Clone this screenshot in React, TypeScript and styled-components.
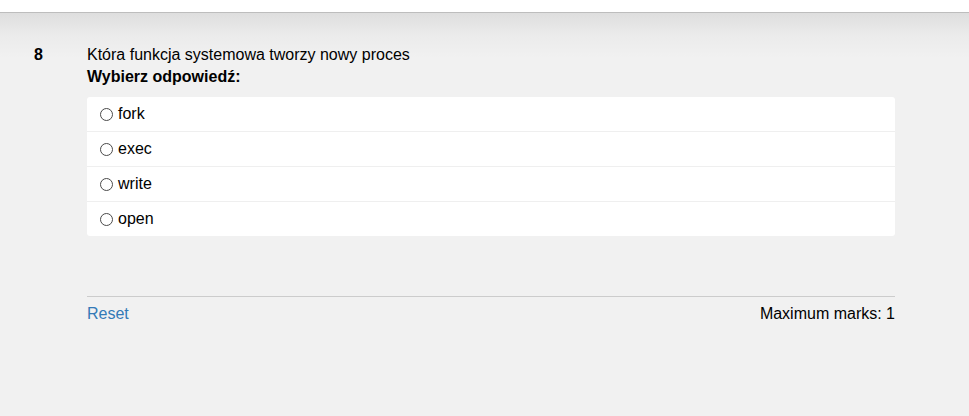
import React from "react";
import styled, { createGlobalStyle } from "styled-components";

const Global = createGlobalStyle`
  html, body { margin: 0; padding: 0; }
  body {
    background: #f1f1f1;
    font-family: "Liberation Sans", Arial, sans-serif;
    font-size: 16px;
    color: #000;
  }
`;

const Page = styled.div`
  min-height: 416px;
  background: #f1f1f1;
`;

const TopBar = styled.div`
  height: 12px;
  background: #fff;
  border-bottom: 1px solid #bdbdbd;
`;

const Content = styled.div`
  background: linear-gradient(to bottom, #dedede 0px, #ebebeb 22px, #f1f1f1 45px);
  padding: 33px 0 0 0;
  min-height: 380px;
`;

const QuestionRow = styled.div`
  display: flex;
  align-items: flex-start;
`;

const Number = styled.div`
  width: 87px;
  box-sizing: border-box;
  padding-left: 34px;
  font-weight: bold;
  line-height: 18px;
`;

const Body = styled.div`
  width: 808px;
`;

const QuestionText = styled.div`
  line-height: 18px;
`;

const Prompt = styled.div`
  font-weight: bold;
  line-height: 18px;
  margin-top: 4px;
`;

const Answers = styled.div`
  margin-top: 11px;
  background: #fff;
  border-radius: 3px;
  display: flex;
  flex-direction: column;
`;

const Answer = styled.label<{ $last?: boolean }>`
  display: flex;
  align-items: center;
  height: 34px;
  padding-left: 13px;
  border-bottom: ${(p) => (p.$last ? "none" : "1px solid #efefef")};
  line-height: 18px;
`;

const Radio = styled.input`
  appearance: none;
  -webkit-appearance: none;
  box-sizing: border-box;
  width: 13px;
  height: 13px;
  border: 1px solid #4a4a4a;
  border-radius: 50%;
  background: #fff;
  margin: 0 5px 0 0;
`;

const Footer = styled.div`
  margin-top: 60px;
  border-top: 1px solid #cccccc;
  display: flex;
  justify-content: space-between;
  padding-top: 8px;
  line-height: 18px;
`;

const ResetLink = styled.a`
  color: #337ab7;
  text-decoration: none;
`;

const Marks = styled.span`
  color: #000;
`;

const options = ["fork", "exec", "write", "open"];

export default function App() {
  return (
    <Page>
      <Global />
      <TopBar />
      <Content>
        <QuestionRow>
          <Number>8</Number>
          <Body>
            <QuestionText>Która funkcja systemowa tworzy nowy proces</QuestionText>
            <Prompt>Wybierz odpowiedź:</Prompt>
            <Answers>
              {options.map((o, i) => (
                <Answer key={o} $last={i === options.length - 1}>
                  <Radio type="radio" name="q8" />
                  {o}
                </Answer>
              ))}
            </Answers>
            <Footer>
              <ResetLink href="#">Reset</ResetLink>
              <Marks>Maximum marks: 1</Marks>
            </Footer>
          </Body>
        </QuestionRow>
      </Content>
    </Page>
  );
}
